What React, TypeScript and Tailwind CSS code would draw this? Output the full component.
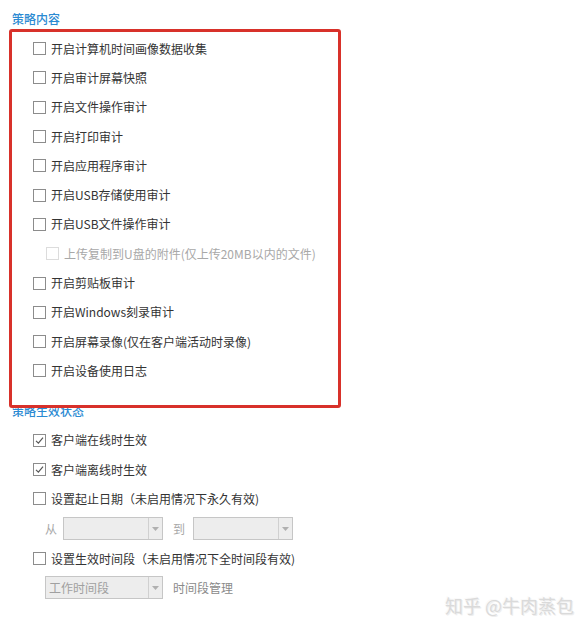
const font = { fontFamily: '"Noto Sans CJK SC", "Noto Sans", sans-serif' };

function Box({ checked = false, disabled = false }: { checked?: boolean; disabled?: boolean }) {
  return (
    <span
      className={
        "flex h-[13px] w-[13px] shrink-0 items-center justify-center border bg-white " +
        (disabled ? "border-[#dcdcdc]" : "border-[#8c8c8c]")
      }
    >
      {checked && (
        <svg width="11" height="11" viewBox="0 0 11 11">
          <path d="M2 5.8 L4.4 8.2 L9 2.6" fill="none" stroke="#555" strokeWidth="1.2" />
        </svg>
      )}
    </span>
  );
}

function Row({
  label,
  checked,
  disabled,
  indent,
  h = "h-[29.3px]",
}: {
  label: string;
  checked?: boolean;
  disabled?: boolean;
  indent?: boolean;
  h?: string;
}) {
  return (
    <div className={`flex items-center gap-[5px] ${h} ${indent ? "pl-[46px]" : "pl-[33px]"}`}>
      <Box checked={checked} disabled={disabled} />
      <span className={disabled ? "text-[#a8a8a8]" : "text-[#333]"}>{label}</span>
    </div>
  );
}

function Select({ w, text }: { w: string; text?: string }) {
  return (
    <div className={`flex h-[23px] ${w} items-stretch border border-[#c6c6c6] bg-[#ededed]`}>
      <span className="flex flex-1 items-center pl-[3px] text-[#a0a0a0]">{text}</span>
      <span className="flex w-[14px] items-center justify-center border-l border-[#d0d0d0]">
        <svg width="7" height="4" viewBox="0 0 7 4">
          <path d="M0 0 L7 0 L3.5 4 Z" fill="#b0b0b0" />
        </svg>
      </span>
    </div>
  );
}

const items = [
  "开启计算机时间画像数据收集",
  "开启审计屏幕快照",
  "开启文件操作审计",
  "开启打印审计",
  "开启应用程序审计",
  "开启USB存储使用审计",
  "开启USB文件操作审计",
];

const items2 = [
  "开启剪贴板审计",
  "开启Windows刻录审计",
  "开启屏幕录像(仅在客户端活动时录像)",
  "开启设备使用日志",
];

export default function App() {
  return (
    <div className="relative h-[629px] w-[588px] overflow-hidden bg-white text-[12px]" style={font}>
      <div className="flex flex-col pt-[9px]">
        <div className="flex h-[20px] items-center pl-[12px] font-medium text-[#2b8ad2]">策略内容</div>
        <div className="h-[5px]" />
        {items.map((t) => (
          <Row key={t} label={t} />
        ))}
        <Row label="上传复制到U盘的附件(仅上传20MB以内的文件)" disabled indent />
        {items2.map((t) => (
          <Row key={t} label={t} />
        ))}
        <div className="h-[15px]" />
        <div className="flex h-[20px] items-center pl-[12px] font-medium text-[#2b8ad2]">策略生效状态</div>
        <div className="h-[5px]" />
        <Row label="客户端在线时生效" checked />
        <Row label="客户端离线时生效" checked />
        <Row label="设置起止日期（未启用情况下永久有效)" />
        <div className="flex h-[31px] items-center pl-[45px]">
          <span className="w-[18px] text-[#a8a8a8]">从</span>
          <Select w="w-[100px]" />
          <span className="w-[30px] pl-[10px] text-[#a8a8a8]">到</span>
          <Select w="w-[100px]" />
        </div>
        <Row label="设置生效时间段（未启用情况下全时间段有效)" h="h-[29px]" />
        <div className="flex h-[29px] items-center gap-[10px] pl-[45px]">
          <Select w="w-[118px]" text="工作时间段" />
          <span className="text-[#8a8a8a]">时间段管理</span>
        </div>
      </div>

      <div className="absolute left-[9px] top-[29px] h-[379px] w-[332px] rounded-[3px] border-[3px] border-[#d8312a]" />

      <div
        className="absolute left-[445px] top-[592px] text-[18px] text-[#dadada]"
        style={{ textShadow: "1px 1px 0 #eeeeee, -1px -1px 0 #fafafa" }}
      >
        知乎 @牛肉蒸包
      </div>
    </div>
  );
}
